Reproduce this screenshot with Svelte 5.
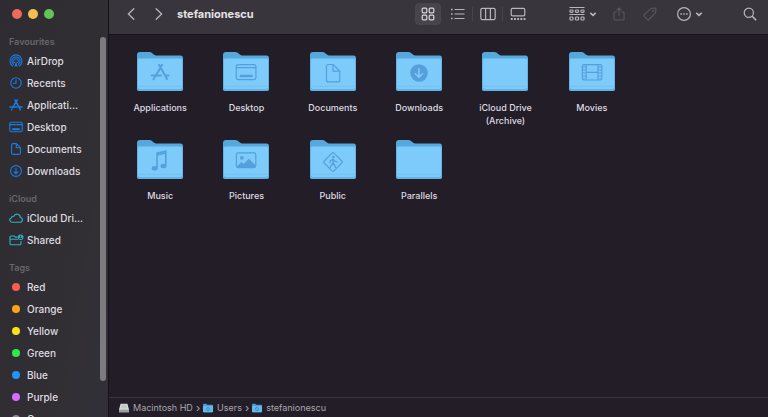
<script lang="ts">
	type Place = { name: string; icon: string };

	const favourites: Place[] = [
		{ name: 'AirDrop', icon: 'airdrop' },
		{ name: 'Recents', icon: 'clock' },
		{ name: 'Applicati...', icon: 'apps' },
		{ name: 'Desktop', icon: 'desktop' },
		{ name: 'Documents', icon: 'document' },
		{ name: 'Downloads', icon: 'download' }
	];

	const cloud: Place[] = [
		{ name: 'iCloud Dri...', icon: 'cloud' },
		{ name: 'Shared', icon: 'shared' }
	];

	const tags = ['Red', 'Orange', 'Yellow', 'Green', 'Blue', 'Purple', 'Grey'];

	const folders: Place[] = [
		{ name: 'Applications', icon: 'apps' },
		{ name: 'Desktop', icon: 'desktop' },
		{ name: 'Documents', icon: 'document' },
		{ name: 'Downloads', icon: 'download' },
		{ name: 'iCloud Drive (Archive)', icon: '' },
		{ name: 'Movies', icon: 'movie' },
		{ name: 'Music', icon: 'music' },
		{ name: 'Pictures', icon: 'picture' },
		{ name: 'Public', icon: 'public' },
		{ name: 'Parallels', icon: '' }
	];

	let view = $state('icons');
</script>

{#snippet placeIcon(icon: string)}
	<svg class="place-icon" viewBox="0 0 14 14" aria-hidden="true">
		{#if icon === 'airdrop'}
			<path d="M3.8 12A6 6 0 1 1 10.2 12" />
			<path d="M4.6 10.3A4.1 4.1 0 1 1 9.4 10.3" />
			<path d="M5.6 8.7A2.2 2.2 0 1 1 8.4 8.7" />
			<path d="M7 7.5 5.4 12.4h3.2z" class="solid" />
		{:else if icon === 'clock'}
			<circle cx="7" cy="7" r="5.2" />
			<path d="M7 3.7V7.3H4.3" />
		{:else if icon === 'apps'}
			<path d="M6 1.8 11.4 11.8M8.2 1.8 3.9 9.4M1 9h7M10.4 9H13M3 11l-.5 1" class="medium" />
		{:else if icon === 'desktop'}
			<rect x=".8" y="2.2" width="12.4" height="9.6" rx="1.6" />
			<path d="M1 4.6h12" />
			<path d="M3.8 9.3h6.4" class="thick" />
		{:else if icon === 'document'}
			<path d="M2.6 3.1q0-1.5 1.5-1.5H7.4L11.4 5.6v5.3q0 1.5-1.5 1.5H4.1Q2.6 12.4 2.6 10.9z" />
			<path d="M7.3 1.8V5.8h3.8" />
		{:else if icon === 'download'}
			<circle cx="7" cy="7" r="5.4" />
			<path d="M7 4v5.6M4.9 7.7 7 9.8l2.1-2.1" />
		{:else if icon === 'cloud'}
			<path d="M3.7 11.3C.2 11.3-.1 7.5 2.4 7 2.5 5.6 3.8 5 4.8 5.4 6.3 1.8 11.4 2.8 11.3 6.5 14.2 6.8 14 11.3 11.1 11.3z" />
		{:else if icon === 'shared'}
			<path d="M8.2 4.1H6.3L5.3 3H2.2Q1 3 1 4.2v6.2q0 1.3 1.3 1.3h8.4q1.3 0 1.3-1.3V8.5M1 6.2h7.5" />
			<circle cx="11.6" cy="4.2" r="2.8" class="solid" />
			<path d="M11.6 3v.8M10.5 5.6q1.1-1 2.2 0" class="cut" />
		{/if}
	</svg>
{/snippet}

{#snippet folderIcon(icon: string)}
	<svg class="folder-icon" viewBox="0 0 46 39" aria-hidden="true">
		<path d="M0 3Q0 0 3 0H12.5C15.5 0 16.5 3.6 20 3.6H43.5Q46 3.6 46 6.2V36.5Q46 39 43.5 39H2.5Q0 39 0 36.5Z" fill="#56a7dc" />
		<path d="M0 8Q0 5.8 2.2 5.8H43.8Q46 5.8 46 8V36.5Q46 39 43.5 39H2.5Q0 39 0 36.5Z" fill="#62b2e6" />
		<path d="M1 8.2Q1 6.8 2.6 6.8H43.4Q45 6.8 45 8.2V35.2Q45 37 43 37H3Q1 37 1 35.2Z" fill="#7dcbfb" />
		<path d="M1.5 34.3H44.5" stroke="#73c1f2" />
		<g class="emblem">
			{#if icon === 'apps'}
				<path d="M22 12.8 30 27M25 12.8 18.3 24.4M14.6 23.6H24M28.6 23.6H31.6M17.2 26l-.7 1.3" stroke-width="2" />
			{:else if icon === 'desktop'}
				<rect x="13.3" y="12.6" width="19.6" height="15" rx="2" />
				<path d="M13.3 15.7h19.6" />
				<path d="M17.8 24h10.8" stroke-width="2.6" />
			{:else if icon === 'document'}
				<path d="M16.5 14.5q0-2 2-2h4.6l6.6 6.6v8.8q0 2-2 2h-9.2q-2 0-2-2z" />
				<path d="M23 12.6v6.6h6.6" />
			{:else if icon === 'download'}
				<circle cx="23" cy="21" r="8.8" class="fill" />
				<path d="M23 16.5v8.2M19.4 21.7l3.6 3.5 3.6-3.5" class="light" />
			{:else if icon === 'movie'}
				<rect x="13.4" y="12.6" width="19.4" height="15.4" rx="1.4" />
				<path d="M17.2 12.6V28M29 12.6V28M17.2 20.3H29" />
				<path d="M15.3 14.5V27M30.9 14.5V27" class="holes" />
			{:else if icon === 'music'}
				<path d="M20 27.6V13.2l8.8-2v14.4M20 15l8.8-2" stroke-width="1.6" />
				<ellipse cx="17.7" cy="28.2" rx="3" ry="2.3" class="fill" />
				<ellipse cx="26.5" cy="26" rx="3" ry="2.3" class="fill" />
			{:else if icon === 'picture'}
				<rect x="13.4" y="12.8" width="19.4" height="14.8" rx="1.8" />
				<circle cx="18.9" cy="17.8" r="1.9" class="fill" />
				<path d="M14 26.3 18.4 22l2.3 2 5-5.2 6.7 6.3v2.2H14z" class="fill" />
			{:else if icon === 'public'}
				<path d="M22 13.2q1-1 2 0l7.8 7.8q1 1 0 2L24 30.8q-1 1-2 0L14.2 23q-1-1 0-2z" />
				<circle cx="23.4" cy="17" r="1.3" class="fill" />
				<path d="M23.2 19.2v4l2.5 4.2M22.8 23l-2.7 4.3M23.2 19.2l-2.7 1.4-.5 2M23.4 19.6l2 2 1.8.2" stroke-width="1.3" />
			{/if}
		</g>
	</svg>
{/snippet}

{#snippet chevronDown()}
	<svg class="chevron" viewBox="0 0 8 8" aria-hidden="true"><path d="M1.3 2.8 4 5.3l2.7-2.5" /></svg>
{/snippet}

{#snippet smallFolder()}
	<svg class="path-icon" viewBox="0 0 10 10" aria-hidden="true">
		<path d="M0 1.6Q0 .8.8.8H3.2L4.3 1.7H9.2Q10 1.7 10 2.5V8.4Q10 9.2 9.2 9.2H.8Q0 9.2 0 8.4z" fill="#459bd2" />
		<path d="M0 3h10v5.4q0 .8-.8.8H.8Q0 9.2 0 8.4z" fill="#64b9ef" />
		<circle cx="5" cy="6" r="1.5" fill="none" stroke="#408fc6" />
	</svg>
{/snippet}

<div class="window">
	<aside class="sidebar">
		<div class="lights">
			<button class="light close" aria-label="Close"></button>
			<button class="light minimise" aria-label="Minimise"></button>
			<button class="light zoom" aria-label="Zoom"></button>
		</div>

		<nav class="places">
			<section>
				<h2>Favourites</h2>
				{#each favourites as place}
					<a href="#{place.icon}">{@render placeIcon(place.icon)}{place.name}</a>
				{/each}
			</section>
			<section class="cloud">
				<h2>iCloud</h2>
				{#each cloud as place}
					<a href="#{place.icon}">{@render placeIcon(place.icon)}{place.name}</a>
				{/each}
			</section>
			<section>
				<h2>Tags</h2>
				{#each tags as tag}
					<a href="#{tag}"><span class="dot {tag.toLowerCase()}"></span>{tag}</a>
				{/each}
			</section>
		</nav>
		<div class="thumb"></div>
	</aside>

	<main>
		<header>
			<button class="arrow" aria-label="Back">
				<svg viewBox="0 0 14 14"><path d="M9.8 1.8 4.4 7l5.4 5.2" /></svg>
			</button>
			<button class="arrow" aria-label="Forward">
				<svg viewBox="0 0 14 14"><path d="M4.2 1.8 9.6 7l-5.4 5.2" /></svg>
			</button>
			<h1>stefanionescu</h1>

			<div class="views">
				<button class:selected={view === 'icons'} aria-label="Icons" onclick={() => (view = 'icons')}>
					<svg viewBox="0 0 16 14">
						<rect x="2.2" y="1.2" width="4.6" height="4.6" rx="1" />
						<rect x="9.2" y="1.2" width="4.6" height="4.6" rx="1" />
						<rect x="2.2" y="8.2" width="4.6" height="4.6" rx="1" />
						<rect x="9.2" y="8.2" width="4.6" height="4.6" rx="1" />
					</svg>
				</button>
				<button class:selected={view === 'list'} aria-label="List" onclick={() => (view = 'list')}>
					<svg viewBox="0 0 16 14">
						<path d="M4.5 2.5h10M4.5 7h10M4.5 11.5h10" />
						<path d="M1 2.5h1.6M1 7h1.6M1 11.5h1.6" stroke-width="1.6" />
					</svg>
				</button>
				<button class="divided" class:selected={view === 'columns'} aria-label="Columns" onclick={() => (view = 'columns')}>
					<svg viewBox="0 0 16 14">
						<rect x=".8" y="1.4" width="14.4" height="11.2" rx="1.6" />
						<path d="M5.6 1.4v11.2M10.4 1.4v11.2" />
					</svg>
				</button>
				<button class="divided" class:selected={view === 'gallery'} aria-label="Gallery" onclick={() => (view = 'gallery')}>
					<svg viewBox="0 0 16 14">
						<rect x="1.2" y="1.4" width="13.6" height="7.4" rx="1.4" />
						<path d="M.8 12h15" stroke-width="1.8" stroke-dasharray="1.9 1.3" />
					</svg>
				</button>
			</div>

			<button class="tool group" aria-label="Group">
				<svg viewBox="0 0 16 14">
					<path d="M.5 .5h15M.5 7.5h15" />
					<rect x="1" y="3" width="3" height="2.4" rx=".8" />
					<rect x="6.5" y="3" width="3" height="2.4" rx=".8" />
					<rect x="12" y="3" width="3" height="2.4" rx=".8" />
					<rect x="1" y="10" width="3" height="3" rx=".8" />
					<rect x="6.5" y="10" width="3" height="3" rx=".8" />
					<rect x="12" y="10" width="3" height="3" rx=".8" />
				</svg>
				{@render chevronDown()}
			</button>
			<button class="tool" aria-label="Share" disabled>
				<svg viewBox="0 0 16 16">
					<path d="M5.4 5.6H3.2q-1 0-1 1v7.2q0 1 1 1h9.6q1 0 1-1V6.6q0-1-1-1h-2.2M8 10V1.2M5.2 4 8 1.2 10.8 4" />
				</svg>
			</button>
			<button class="tool" aria-label="Tags" disabled>
				<svg viewBox="0 0 16 16">
					<path d="M9.2 1.6 13.4 1.2Q14.8 1.2 14.8 2.6L14.4 6.6 6.8 14.2Q5.9 15.1 5 14.2L1.4 10.6Q.6 9.7 1.4 8.8z" />
					<circle cx="11.6" cy="4.6" r=".6" />
				</svg>
			</button>
			<button class="tool more" aria-label="More">
				<svg viewBox="0 0 14 14">
					<circle cx="7" cy="7" r="6.4" />
					<path d="M3.4 7h1.5M6.3 7h1.5M9.1 7h1.5" stroke-width="1.6" />
				</svg>
				{@render chevronDown()}
			</button>
			<button class="tool search" aria-label="Search">
				<svg viewBox="0 0 14 14"><circle cx="5.8" cy="5.8" r="4.6" /><path d="m9.2 9.2 4 4" stroke-width="1.6" /></svg>
			</button>
		</header>

		<div class="folders">
			{#each folders as folder}
				<button class="folder">
					{@render folderIcon(folder.icon)}
					<span>{folder.name}</span>
				</button>
			{/each}
		</div>

		<footer>
			<a href="#hd">
				<svg class="path-icon" viewBox="0 0 10 10" aria-hidden="true">
					<path d="M1.6.8h6.8L10 6.4V9.2H0V6.4z" fill="#d9dcdd" />
					<path d="M0 6.6h10v2.6H0z" fill="#9b9fa2" />
					<path d="M2.3 1.8h5.4l.7 3.6H1.6z" fill="#c0c9c9" />
				</svg>Macintosh HD</a>
			<span class="sep">›</span>
			<a href="#users">{@render smallFolder()}Users</a>
			<span class="sep">›</span>
			<a href="#home">{@render smallFolder()}stefanionescu</a>
		</footer>
	</main>
</div>

<style>
	:global(body) {
		background: #231d28;
	}

	.window {
		display: flex;
		height: 100vh;
		overflow: hidden;
		font-family: Inter, 'Liberation Sans', sans-serif;
		font-size: 10px;
		color: #dedce0;
	}

	button {
		padding: 0;
		border: 0;
		background: none;
		color: inherit;
		font: inherit;
	}

	a {
		color: inherit;
		text-decoration: none;
	}

	svg {
		display: block;
		fill: none;
		stroke: currentColor;
		overflow: visible;
	}

	.sidebar {
		position: relative;
		flex: none;
		width: 109px;
		box-sizing: border-box;
		border-right: 1px solid #151217;
		background: linear-gradient(100deg, #2e2c30, #322f34 70%, #313039);
	}

	.lights {
		display: flex;
		gap: 6px;
		padding: 9px 0 15px 12px;
	}

	.light {
		width: 10px;
		height: 10px;
		border-radius: 50%;
	}

	.close {
		background: #ed6a5e;
	}

	.minimise {
		background: #f5bd4f;
	}

	.zoom {
		background: #61c454;
	}

	.places {
		display: flex;
		flex-direction: column;
		gap: 9px;
	}

	h2 {
		margin: 0;
		padding-left: 9px;
		font-size: 9px;
		font-weight: 600;
		line-height: 16px;
		color: #69666c;
	}

	.places a {
		display: flex;
		align-items: center;
		gap: 4px;
		height: 22px;
		padding-left: 9px;
		font-weight: 500;
		white-space: nowrap;
	}

	.place-icon {
		width: 14px;
		height: 14px;
		color: #1c7be0;
		stroke-width: 1.1;
		stroke-linecap: round;
		stroke-linejoin: round;
	}

	.cloud .place-icon {
		color: #2fb0c8;
	}

	.solid {
		fill: currentColor;
		stroke: none;
	}

	.medium {
		stroke-width: 1.5;
	}

	.thick {
		stroke-width: 2;
	}

	.cut {
		stroke: #302d32;
	}

	.dot {
		width: 8px;
		height: 8px;
		margin: 0 3px;
		border-radius: 50%;
	}

	.red {
		background: #fc5b51;
	}

	.orange {
		background: #fda414;
	}

	.yellow {
		background: #fee01a;
	}

	.green {
		background: #2eea49;
	}

	.blue {
		background: #2094fb;
	}

	.purple {
		background: #d56cfb;
	}

	.grey {
		background: #8e8c91;
	}

	.thumb {
		position: absolute;
		top: 37px;
		right: 2px;
		bottom: 36px;
		width: 6px;
		border-radius: 3px;
		background: #7d7b80;
	}

	main {
		display: flex;
		flex: 1;
		flex-direction: column;
		min-width: 0;
	}

	header {
		display: flex;
		flex: none;
		align-items: center;
		gap: 11px;
		height: 28px;
		padding: 0 8px 6px 15px;
		border-bottom: 1px solid #17131a;
		background: #39353c;
		color: #b9b6bb;
		stroke-width: 1.2;
	}

	.arrow svg {
		width: 14px;
		height: 14px;
		stroke-width: 1.3;
		stroke-linecap: round;
	}

	.arrow + .arrow {
		margin-left: 3px;
	}

	h1 {
		flex: 1;
		margin: 0;
		font-size: 11px;
		font-weight: 700;
		color: #e4e2e6;
	}

	.views {
		display: grid;
		grid-template-columns: repeat(4, 30px);
		justify-items: center;
		margin-right: 24px;
	}

	.views button {
		position: relative;
		display: grid;
		place-items: center;
		width: 26px;
		height: 22px;
		border-radius: 4px;
	}

	.views .selected {
		background: #48444b;
		color: #d9d7db;
	}

	.divided::before {
		content: '';
		position: absolute;
		top: 4px;
		left: -3px;
		width: 1px;
		height: 14px;
		background: #48444b;
	}

	.views svg {
		width: 16px;
		height: 14px;
	}

	.tool {
		display: flex;
		align-items: center;
		justify-content: center;
		gap: 4px;
		width: 20px;
	}

	.tool svg {
		flex: none;
		width: 14px;
		height: 14px;
	}

	.tool .chevron {
		width: 8px;
		height: 8px;
		stroke-width: 1.6;
	}

	.group,
	.more {
		width: 30px;
	}

	.group svg:first-child {
		width: 16px;
	}

	.more {
		margin-left: 4px;
	}

	.search {
		margin-left: 24px;
	}

	.tool:disabled {
		color: #5c585f;
	}

	.folders {
		display: grid;
		flex: 1;
		grid-template-columns: repeat(6, 1fr);
		grid-auto-rows: 88px;
		align-content: start;
		padding: 17px 133px 0 8px;
	}

	.folder {
		display: flex;
		flex-direction: column;
		align-items: center;
		gap: 10px;
		line-height: 13px;
		font-size: 9px;
		font-weight: 500;
	}

	.folder span {
		max-width: 72px;
	}

	.folder-icon {
		width: 46px;
		height: 39px;
		stroke: none;
	}

	.emblem {
		stroke: #569fdb;
		stroke-width: 1.2;
		stroke-linecap: round;
	}

	.emblem .fill {
		fill: #569fdb;
		stroke: none;
	}

	.emblem .light {
		stroke: #7dcbfb;
		stroke-width: 1.5;
	}

	.emblem .holes {
		stroke-width: 3;
		stroke-dasharray: 1 2;
		stroke-linecap: butt;
	}

	footer {
		display: flex;
		flex: none;
		align-items: center;
		gap: 3px;
		height: 19px;
		padding: 0 10px;
		border-top: 1px solid #38333d;
		font-size: 9px;
		color: #aaa7ad;
	}

	footer a {
		display: flex;
		align-items: center;
		gap: 4px;
	}

	.path-icon {
		width: 10px;
		height: 10px;
		stroke: none;
	}

	.sep {
		font-size: 11px;
	}
</style>
